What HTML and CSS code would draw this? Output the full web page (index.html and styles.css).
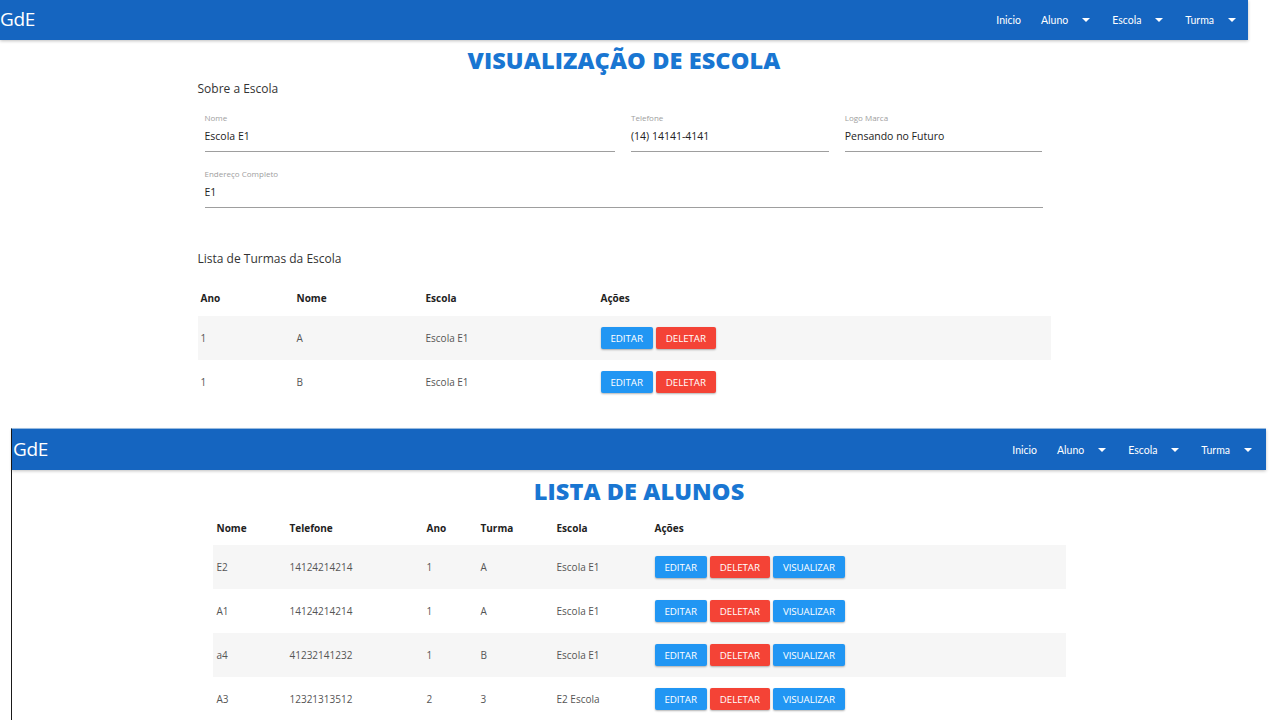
FILE: index.html
```html
<!DOCTYPE html>
<html lang="pt-BR">
<head>
<meta charset="utf-8">
<title>GdE</title>
<link rel="stylesheet" href="styles.css">
</head>
<body>
<div class="stack">
  <section class="screen screen-a">
    <nav class="navbar">
      <span class="brand">GdE</span>
      <ul class="menu">
        <li class="item">Inicio</li>
        <li class="item drop">Aluno <span class="caret"></span></li>
        <li class="item drop">Escola <span class="caret"></span></li>
        <li class="item drop">Turma <span class="caret"></span></li>
      </ul>
    </nav>
    <main class="content">
      <h1 class="page-title">VISUALIZAÇÃO DE ESCOLA</h1>
      <div class="container">
        <h2 class="section-title">Sobre a Escola</h2>
        <div class="form-row">
          <div class="field f-wide"><label>Nome</label><div class="value">Escola E1</div></div>
          <div class="field f-mid"><label>Telefone</label><div class="value">(14) 14141-4141</div></div>
          <div class="field f-mid"><label>Logo Marca</label><div class="value">Pensando no Futuro</div></div>
        </div>
        <div class="form-row">
          <div class="field f-full"><label>Endereço Completo</label><div class="value">E1</div></div>
        </div>
        <h2 class="section-title list-title">Lista de Turmas da Escola</h2>
        <table class="grid turmas">
          <thead>
            <tr><th class="c-ano">Ano</th><th class="c-nome">Nome</th><th class="c-esc">Escola</th><th>Ações</th></tr>
          </thead>
          <tbody>
            <tr class="odd"><td>1</td><td>A</td><td>Escola E1</td><td><div class="actions"><button class="btn blue">Editar</button><button class="btn red">Deletar</button></div></td></tr>
            <tr><td>1</td><td>B</td><td>Escola E1</td><td><div class="actions"><button class="btn blue">Editar</button><button class="btn red">Deletar</button></div></td></tr>
          </tbody>
        </table>
      </div>
    </main>
  </section>

  <section class="screen screen-b">
    <nav class="navbar">
      <span class="brand">GdE</span>
      <ul class="menu">
        <li class="item">Inicio</li>
        <li class="item drop">Aluno <span class="caret"></span></li>
        <li class="item drop">Escola <span class="caret"></span></li>
        <li class="item drop">Turma <span class="caret"></span></li>
      </ul>
    </nav>
    <main class="content">
      <h1 class="page-title title-b">LISTA DE ALUNOS</h1>
      <div class="container">
        <table class="grid alunos">
          <thead>
            <tr><th class="a-nome">Nome</th><th class="a-tel">Telefone</th><th class="a-ano">Ano</th><th class="a-tur">Turma</th><th class="a-esc">Escola</th><th>Ações</th></tr>
          </thead>
          <tbody>
            <tr class="odd"><td>E2</td><td>14124214214</td><td>1</td><td>A</td><td>Escola E1</td><td><div class="actions"><button class="btn blue">Editar</button><button class="btn red">Deletar</button><button class="btn blue">Visualizar</button></div></td></tr>
            <tr><td>A1</td><td>14124214214</td><td>1</td><td>A</td><td>Escola E1</td><td><div class="actions"><button class="btn blue">Editar</button><button class="btn red">Deletar</button><button class="btn blue">Visualizar</button></div></td></tr>
            <tr class="odd"><td>a4</td><td>41232141232</td><td>1</td><td>B</td><td>Escola E1</td><td><div class="actions"><button class="btn blue">Editar</button><button class="btn red">Deletar</button><button class="btn blue">Visualizar</button></div></td></tr>
            <tr><td>A3</td><td>12321313512</td><td>2</td><td>3</td><td>E2 Escola</td><td><div class="actions"><button class="btn blue">Editar</button><button class="btn red">Deletar</button><button class="btn blue">Visualizar</button></div></td></tr>
          </tbody>
        </table>
      </div>
    </main>
  </section>
</div>
</body>
</html>
```
FILE: styles.css
```css
* { box-sizing: border-box; }
html, body { margin: 0; padding: 0; }
body {
  width: 1280px;
  height: 720px;
  overflow: hidden;
  background: #fff;
  font-family: "Open Sans", "Noto Sans", sans-serif;
  color: #333;
}
.stack { display: flex; flex-direction: column; }

.screen { display: flex; flex-direction: column; background: #fff; }
.screen-a { width: 1248px; height: 428px; }
.screen-b {
  width: 1255px;
  height: 292px;
  margin-left: 11px;
  border-left: 1px solid #1a1a1a;
  border-top: 1px solid #9ec3ea;
}

.navbar {
  height: 40px;
  flex: none;
  background: #1565c0;
  display: flex;
  align-items: center;
  justify-content: space-between;
  box-shadow: 0 1px 3px rgba(0,0,0,0.25);
  position: relative;
  z-index: 1;
}
.screen-b .navbar { height: 41px; padding-left: 1px; }
.brand {
  font-family: "Open Sans", sans-serif;
  font-size: 19px;
  color: #fff;
  line-height: 1;
  margin-top: -1px;
  letter-spacing: -0.3px;
}
.menu {
  list-style: none;
  margin: 0;
  padding: 0 10px 0 0;
  display: flex;
  align-items: center;
  gap: 20px;
}
.screen-b .menu { padding-right: 12px; }
.item {
  font-family: Lato, sans-serif;
  font-size: 10.5px;
  color: #fff;
  display: flex;
  align-items: center;
}
.item.drop { gap: 14px; padding-right: 2px; }
.caret {
  width: 0; height: 0;
  border-left: 4px solid transparent;
  border-right: 4px solid transparent;
  border-top: 4px solid #fff;
}

.content { display: flex; flex-direction: column; align-items: center; }
.page-title {
  margin: 7px 0 0;
  font-family: "Open Sans", sans-serif;
  font-weight: 800;
  font-size: 23.5px;
  line-height: 26px;
  color: #1976d2;
  letter-spacing: 0.1px;
}
.title-b { margin-top: 8px; }
.container { width: 853px; display: flex; flex-direction: column; }
.section-title {
  margin: 8px 0 0;
  font-size: 12px;
  font-weight: 400;
  color: #333;
  line-height: 16px;
}
.list-title { margin-top: 43px; }

.form-row { display: flex; gap: 16px; padding: 0 8px 0 7px; }
.form-row:first-of-type { margin-top: 15px; }
.form-row + .form-row { margin-top: 16px; }
.field { display: flex; flex-direction: column; border-bottom: 1px solid #9e9e9e; padding-bottom: 8px; }
.f-wide { width: 411px; }
.f-mid { width: 198px; }
.f-full { flex: 1; }
.field label { font-size: 8px; color: #9e9e9e; line-height: 12px; }
.field .value { font-size: 10.5px; color: #222; line-height: 14px; margin-top: 5px; }

.grid { border-collapse: collapse; width: 100%; margin-top: 13px; }
.grid th {
  text-align: left;
  font-size: 10px;
  font-weight: 700;
  color: #222;
  height: 36px;
  padding: 0 0 0 3px;
}
.grid td {
  font-size: 10px;
  color: #555;
  height: 44px;
  padding: 0 0 0 3px;
}
.grid tr.odd td { background: #f6f6f6; }
.turmas .c-ano { width: 96px; }
.turmas .c-nome { width: 129px; }
.turmas .c-esc { width: 175px; }
.alunos { margin-top: 7px; }
.alunos th { height: 34px; padding-left: 4px; }
.alunos td { padding-left: 4px; }
.alunos .a-nome { width: 73px; }
.alunos .a-tel { width: 137px; }
.alunos .a-ano { width: 54px; }
.alunos .a-tur { width: 76px; }
.alunos .a-esc { width: 98px; }

.actions { display: flex; gap: 3px; }
.btn {
  border: none;
  border-radius: 2px;
  height: 22px;
  padding: 0 10px;
  font-family: "Open Sans", sans-serif;
  font-size: 9.8px;
  text-transform: uppercase;
  color: #fff;
  box-shadow: 0 1px 2px rgba(0,0,0,0.3);
  letter-spacing: -0.1px;
}
.btn.blue { background: #2196f3; }
.btn.red { background: #f44336; }
```
